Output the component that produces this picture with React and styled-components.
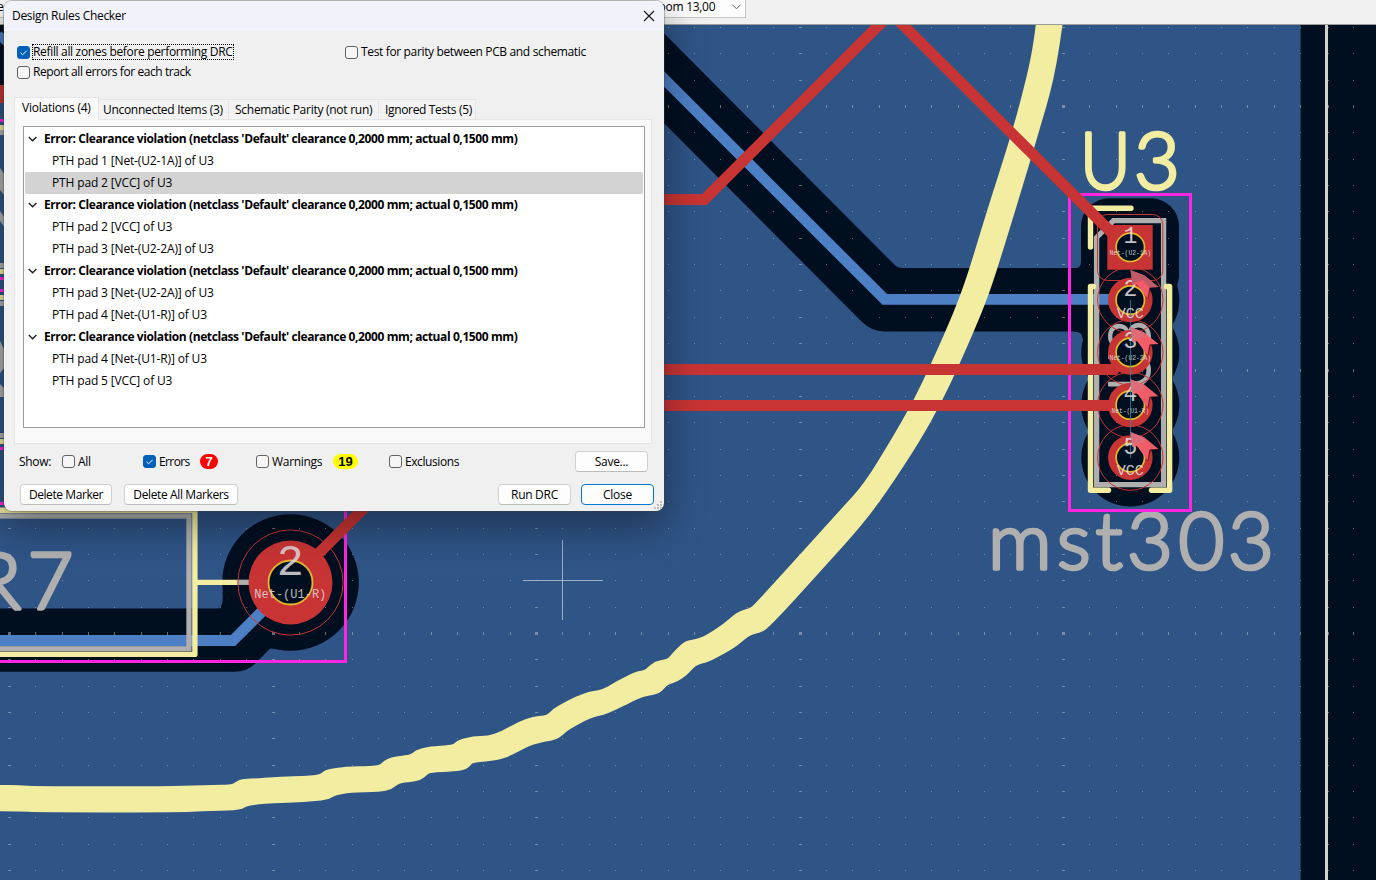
import React from "react";
import styled, { createGlobalStyle, css } from "styled-components";

const C = {
  zone: "#2f5486",
  gap: "#000f20",
  red: "#c83434",
  track: "#4d7fc4",
  silk: "#f2eda1",
  fab: "#afafaf",
  court: "#ff26e2",
  hole: "#e3b72e",
};

const GlobalStyle = createGlobalStyle`
  html, body { margin: 0; padding: 0; overflow: hidden; }
  * { box-sizing: border-box; }
`;

const Editor = styled.div`
  position: relative;
  width: 1376px;
  height: 880px;
  overflow: hidden;
  display: flex;
  flex-direction: column;
  background: ${C.zone};
  font-family: "Open Sans", "Noto Sans", sans-serif;
  font-size: 12px;
  color: #000;
`;

const Toolbar = styled.div`
  height: 25px;
  flex: none;
  display: flex;
  align-items: flex-start;
  background: #f0f0f0;
  border-bottom: 1px solid #9c9c98;
`;

const GridCombo = styled.div`
  width: 600px;
  height: 18px;
  line-height: 14px;
  background: #fdfdfd;
  border-bottom: 1px solid #c4c4c4;
  white-space: nowrap;
  text-indent: -3px;
`;

const ZoomCombo = styled.div`
  width: 146px;
  height: 18px;
  padding: 0 4px 4px 52px;
  display: flex;
  align-items: center;
  justify-content: space-between;
  background: #fdfdfd;
  border: solid #c4c4c4;
  border-width: 0 1px 1px 0;
  letter-spacing: -0.28px;
`;

const Board = styled.svg`
  flex: none;
  display: block;
`;

const Dialog = styled.section`
  position: absolute;
  left: 4px;
  top: 1px;
  width: 660px;
  height: 510px;
  display: flex;
  flex-direction: column;
  background: #f0f0f0;
  border-radius: 8px;
  box-shadow: 0 0 1px 1px rgba(70, 70, 70, 0.35), 0 14px 38px 2px rgba(0, 0, 0, 0.36);
`;

const TitleBar = styled.header`
  height: 30px;
  flex: none;
  display: flex;
  align-items: center;
  justify-content: space-between;
  padding: 0 9px 0 8px;
  background: #f2f2fa;
  border-radius: 8px 8px 0 0;
`;

const Label = styled.span`
  white-space: nowrap;
  line-height: 16px;
  letter-spacing: ${(p) => p.$ls ?? -0.3}px;
  ${(p) =>
    p.$focus &&
    css`
      outline: 1px dotted #000;
      outline-offset: -1px;
      margin-left: -1px;
      padding: 0 1px;
      line-height: 16px;
    `}
`;

const Options = styled.div`
  display: grid;
  grid-template-columns: 328px 1fr;
  grid-auto-rows: 20px;
  padding: 11px 0 0 13px;
  height: 66px;
  flex: none;
`;

const Check = styled.label`
  display: flex;
  align-items: center;
  gap: 3px;
  width: ${(p) => (p.$w ? `${p.$w}px` : "auto")};
`;

const Box = styled.span`
  width: 13px;
  height: 13px;
  flex: none;
  display: flex;
  align-items: center;
  justify-content: center;
  border: 1px solid ${(p) => (p.$on ? "#005fb8" : "#626262")};
  background: ${(p) => (p.$on ? "#005fb8" : "#f6f6f6")};
  border-radius: 3px;
`;

const Tabs = styled.div`
  display: flex;
  align-items: flex-end;
  height: 22px;
  flex: none;
  margin-left: 10px;
  position: relative;
  z-index: 1;
`;

const Tab = styled.div`
  width: ${(p) => p.$w}px;
  height: ${(p) => (p.$active ? 23 : 20)}px;
  margin-bottom: ${(p) => (p.$active ? -1 : 0)}px;
  padding: ${(p) => (p.$active ? "0 0 3px" : "1px 0 0")};
  padding-left: ${(p) => p.$pad}px;
  display: flex;
  align-items: center;
  background: ${(p) => (p.$active ? "#f9f9f9" : "#f3f3f3")};
  border: 1px solid #e5e5e5;
  border-width: ${(p) => (p.$active ? "1px 1px 0 1px" : "1px 1px 0 0")};
`;

const Panel = styled.div`
  width: 638px;
  height: 325px;
  flex: none;
  margin-left: 10px;
  padding: 6px 6px 15px 8px;
  background: #f9f9f9;
  border: 1px solid #e5e5e5;
  display: flex;
`;

const Tree = styled.div`
  flex: 1;
  background: #fff;
  border: 1px solid #9a9ca0;
  padding: 1px;
`;

const TreeRow = styled.div`
  height: 22px;
  display: flex;
  align-items: center;
  padding-left: ${(p) => (p.$group ? 3 : 27)}px;
  border-radius: 2px;
  background: ${(p) => (p.$selected ? "#d3d3d3" : "transparent")};
  font-weight: ${(p) => (p.$group ? 700 : 400)};
`;

const Chevron = styled.svg`
  flex: none;
  margin-right: 6px;
`;

const Filters = styled.div`
  height: 36px;
  flex: none;
  display: flex;
  align-items: center;
  padding: 0 16px 1px 15px;
`;

const ShowLabel = styled.div`
  width: 43px;
`;

const Badge = styled.span`
  height: 15px;
  width: ${(p) => p.$w}px;
  margin-right: ${(p) => p.$mr}px;
  border-radius: 8px;
  display: flex;
  align-items: center;
  justify-content: center;
  background: ${(p) => p.$bg};
  color: ${(p) => p.$fg};
  font: 700 13px "Liberation Sans", sans-serif;
`;

const Button = styled.button`
  width: ${(p) => p.$w}px;
  height: 21px;
  padding: 0;
  flex: none;
  background: #fdfdfd;
  border: 1px solid ${(p) => (p.$primary ? "#0078d4" : "#d0d0d0")};
  border-bottom-color: ${(p) => (p.$primary ? "#0078d4" : "#bcbcbc")};
  border-radius: 4px;
  font: inherit;
  color: #000;
  display: flex;
  align-items: center;
  justify-content: center;
  margin-left: ${(p) => p.$ml ?? 0}px;
`;

const Spacer = styled.div`
  flex: 1;
`;

const Actions = styled.footer`
  display: flex;
  padding: 4px 10px 0 16px;
`;

const Grip = styled.svg`
  position: absolute;
  right: 2px;
  bottom: 2px;
`;

function CheckItem({ on, focus, w, ls, children }) {
  return (
    <Check $w={w}>
      <Box $on={on}>
        {on && (
          <svg width="11" height="11" viewBox="0 0 11 11">
            <path d="M2.5 5.8 L4.6 7.8 L8.6 3.8" fill="none" stroke="#fff" strokeWidth="1" />
          </svg>
        )}
      </Box>
      <Label $focus={focus} $ls={ls}>{children}</Label>
    </Check>
  );
}

const violations = [
  ["PTH pad 1 [Net-(U2-1A)] of U3", "PTH pad 2 [VCC] of U3"],
  ["PTH pad 2 [VCC] of U3", "PTH pad 3 [Net-(U2-2A)] of U3"],
  ["PTH pad 3 [Net-(U2-2A)] of U3", "PTH pad 4 [Net-(U1-R)] of U3"],
  ["PTH pad 4 [Net-(U1-R)] of U3", "PTH pad 5 [VCC] of U3"],
];

function DrcDialog() {
  return (
    <Dialog>
      <TitleBar>
        <Label>Design Rules Checker</Label>
        <svg width="12" height="12" viewBox="0 0 12 12">
          <path d="M1 1 L11 11 M11 1 L1 11" stroke="#111" strokeWidth="1.1" />
        </svg>
      </TitleBar>
      <Options>
        <CheckItem on focus ls={-0.33}>Refill all zones before performing DRC</CheckItem>
        <CheckItem ls={-0.35}>Test for parity between PCB and schematic</CheckItem>
        <CheckItem ls={-0.42}>Report all errors for each track</CheckItem>
      </Options>
      <Tabs>
        <Tab $active $w={85} $pad={7}><Label $ls={-0.22}>Violations (4)</Label></Tab>
        <Tab $w={130} $pad={4}><Label>Unconnected Items (3)</Label></Tab>
        <Tab $w={150} $pad={6}><Label $ls={-0.27}>Schematic Parity (not run)</Label></Tab>
        <Tab $w={97} $pad={6}><Label $ls={-0.34}>Ignored Tests (5)</Label></Tab>
      </Tabs>
      <Panel>
        <Tree>
          {violations.map((items, i) => (
            <React.Fragment key={i}>
              <TreeRow $group>
                <Chevron width="10" height="10" viewBox="0 0 10 10">
                  <path d="M0.8 3 L4.6 6.8 L8.4 3" fill="none" stroke="#222" strokeWidth="1.4" />
                </Chevron>
                <Label $ls={-0.4}>Error: Clearance violation (netclass 'Default' clearance 0,2000 mm; actual 0,1500 mm)</Label>
              </TreeRow>
              {items.map((t, j) => (
                <TreeRow key={j} $selected={i === 0 && j === 1}>
                  <Label $ls={-0.15}>{t}</Label>
                </TreeRow>
              ))}
            </React.Fragment>
          ))}
        </Tree>
      </Panel>
      <Filters>
        <ShowLabel><Label>Show:</Label></ShowLabel>
        <CheckItem w={81}>All</CheckItem>
        <CheckItem on w={57} ls={-0.6}>Errors</CheckItem>
        <Badge $w={18} $mr={38} $bg="#ff0000" $fg="#fff">7</Badge>
        <CheckItem w={77}>Warnings</CheckItem>
        <Badge $w={25} $mr={31} $bg="#ffff00" $fg="#000">19</Badge>
        <CheckItem ls={-0.42}>Exclusions</CheckItem>
        <Spacer />
        <Button $w={73}><Label>Save...</Label></Button>
      </Filters>
      <Actions>
        <Button $w={92}><Label $ls={-0.42}>Delete Marker</Label></Button>
        <Button $w={114} $ml={12}><Label $ls={-0.38}>Delete All Markers</Label></Button>
        <Spacer />
        <Button $w={73}><Label>Run DRC</Label></Button>
        <Button $w={73} $ml={10} $primary><Label>Close</Label></Button>
      </Actions>
      <Grip width="8" height="8" viewBox="0 0 8 8" fill="#bdbdbd">
        <path d="M6 0h2v2h-2z M3 3h2v2h-2z M6 3h2v2h-2z M0 6h2v2h-2z M3 6h2v2h-2z M6 6h2v2h-2z" />
      </Grip>
    </Dialog>
  );
}

const PITCH = 26.35;

function GridDots() {
  const dots = [];
  for (let i = 0; i < 53; i++) {
    for (let j = -3; j < 30; j++) {
      const major = i % 10 === 0;
      const majorRow = ((j % 10) + 10) % 10 === 0;
      const x = Math.floor(9.5 + i * PITCH);
      const y = Math.floor(106.5 + j * PITCH);
      if (y < 25) continue;
      dots.push(`M${major ? x - 1 : x} ${majorRow ? y - 1 : y}h${major ? 3 : 1}v${majorRow ? 3 : 1}h${major ? -3 : -1}z`);
    }
  }
  return <path d={dots.join("")} fill="#c6c9c6" opacity="0.5" shapeRendering="crispEdges" />;
}

// hand-drawn board outline on the silkscreen: the upper edge, then the lower edge back
const outlinePoints = [
  [-30, 785], [0, 785], [18, 785.2], [39, 786.3], [172, 786.3], [193, 785.3], [213, 785], [230, 784.6], [234, 783.4],
  [239, 779.6], [246, 779], [283, 776.5], [303, 776], [317, 774.8], [321, 773.5], [326, 769.5], [346, 766.6], [371, 766],
  [379, 765], [382, 763], [387, 758.7], [396, 756.2], [408, 755.2], [412, 753.5], [417, 749.5], [430, 746.5], [450, 745.2],
  [453.5, 744], [459, 739.4], [473, 736.4], [488, 735.8], [501, 731.5], [518, 721.8], [533, 716.6], [545, 715.5],
  [548, 714], [555, 707.3], [584, 692.4], [603, 689.6], [617, 680.7], [636, 671.6], [643, 670.6], [646, 669],
  [655, 661], [666, 659.4], [669.5, 657], [676, 649], [685.5, 640.8], [696.7, 639.3], [707, 634.9], [723, 624.3],
  [737, 612], [750, 608], [754, 605], [795, 560], [842, 508], [864, 484], [891, 440], [914, 400], [931.3, 363],
  [945.7, 331], [959, 299], [970, 267], [985, 217], [1009, 142], [1021.7, 97], [1031, 58], [1036, 25], [1038, 0],
  [1066, 0], [1062.5, 25], [1057, 62], [1050, 94], [1042, 121], [1030, 162], [1001.7, 255], [988, 297], [974, 331],
  [960, 363], [942.7, 400], [920.7, 440], [886, 493], [862, 525], [830.7, 560], [768.5, 628.5], [759, 633],
  [750, 634.8], [736.7, 646.3], [725, 653.3], [708, 662.2], [696, 665], [686.7, 675.3], [678, 681.4], [668, 684.5],
  [665, 687.5], [659, 693.8], [648, 695.8], [640, 697.6], [606.7, 714.6], [592, 717], [568, 730], [564, 734],
  [556, 740], [545, 741.6], [530, 745.3], [511.7, 755.2], [498, 760.4], [473, 762.6], [471, 765], [466, 769.6],
  [455, 771.3], [430, 772.6], [427, 775], [421, 779.8], [411, 782], [399, 783], [391, 789.8], [380, 791.9],
  [350, 792.8], [335, 795], [328, 799.8], [303, 802.4], [283, 802.7], [248, 805], [241, 810.2], [213, 811],
  [172, 812.4], [39, 812.4], [18, 811.3], [-30, 811.3],
];

function smooth(points) {
  const mid = (a, b) => [(a[0] + b[0]) / 2, (a[1] + b[1]) / 2];
  const n = points.length;
  let d = `M${mid(points[n - 1], points[0]).join(" ")}`;
  points.forEach((p, i) => {
    d += ` Q${p.join(" ")} ${mid(p, points[(i + 1) % n]).join(" ")}`;
  });
  return `${d} Z`;
}

const pads = [
  { n: "1", y: 247.3, net: "Net-(U2-1A)" },
  { n: "2", y: 300, net: "VCC" },
  { n: "3", y: 352.4, net: "Net-(U2-2A)" },
  { n: "4", y: 405, net: "Net-(U1-R)" },
  { n: "5", y: 457.6, net: "VCC" },
];

const mono = '"Liberation Mono", monospace';
const sketch = 'Lato, "Open Sans", sans-serif';

function BoardText({ x, y, size, color, w, children, transform, weight = 300 }) {
  return (
    <text
      x={x}
      y={y}
      fontFamily={sketch}
      fontWeight={weight}
      fontSize={size}
      fill={color}
      stroke={color}
      strokeWidth={w}
      strokeLinejoin="round"
      strokeLinecap="round"
      transform={transform}
    >
      {children}
    </text>
  );
}

function Pad({ n, y }) {
  return (
    <g>
      {n === "1" ? (
        <>
          <rect x="1107.3" y="225" width="45.4" height="44.7" fill={C.red} />
          <rect x="1097.5" y="214.5" width="65.3" height="66" rx="10" fill="none" stroke={C.red} />
        </>
      ) : (
        <>
          <circle cx="1130.3" cy={y} r="22.3" fill={C.red} />
          <circle cx="1130.3" cy={y} r="32.7" fill="none" stroke={C.red} />
        </>
      )}
      <circle cx="1130.3" cy={y} r="14.2" fill={C.gap} stroke={C.hole} strokeWidth="1.7" />
    </g>
  );
}

function PadText({ n, y, net }) {
  const long = net.length > 4;
  return (
    <g fill="#e6e2e4" fillOpacity="0.85" textAnchor="middle" fontFamily={mono}>
      <text x="1130.3" y={y - 4} fontSize="23">{n}</text>
      <text x="1130.3" y={long ? y + 8 : y + 17.5} fontSize={long ? 6.3 : 15}>{net}</text>
    </g>
  );
}

function BoardCanvas() {
  return (
    <Board width="1376" height="855" viewBox="0 25 1376 855">
      <rect x="0" y="25" width="1376" height="855" fill={C.zone} />
      {/* zone clearances */}
      <g fill={C.gap}>
        <rect x="1300.5" y="25" width="76" height="855" />
        <path d="M600 14 L884.5 299.7 L1110 299.7" fill="none" stroke={C.gap} strokeWidth="63.4" strokeLinejoin="round" />
        <path d="M889 260 Q896 268.3 903 268.3 V275 H885 Z" />
        <path d="M-10 640.2 H234 L290.5 582.5" fill="none" stroke={C.gap} strokeWidth="63.2" strokeLinejoin="round" />
        <circle cx="290.5" cy="582.5" r="68.3" />
        <path d="M222.5 592 Q224 608.5 217 608.5 H232 V592 Z" />
        <path d="M256 661 Q265 649 271 648.5 L290 650 L260 640 Z" />
        <rect x="1081" y="198.3" width="98" height="100" rx="28" />
        <path d="M1081 240 V262 Q1081 268.3 1074 268.3 V331.5 Q1083 331.5 1082.5 339 L1090 345 V240 Z" />
        <path d="M1179 240 V278 L1177 286 H1160 V240 Z" />
        {pads.slice(1).map((p) => (
          <circle key={p.n} cx="1130.3" cy={p.y} r="49" />
        ))}
        <rect x="1088" y="290" width="85" height="160" />
        <rect x="0" y="25" width="5" height="78" />
      </g>
      <GridDots />
      <rect x="1325" y="25" width="3" height="855" fill="#d0d2cd" />
      {/* bottom copper */}
      <g fill="none" stroke={C.track} strokeWidth="10.9">
        <path d="M600 15 L884.7 299.4 H1130" />
        <path d="M-10 640.5 H233 L290.5 583" />
        <path d="M0 42 L6 36" strokeWidth="13" />
      </g>
      {/* fabrication layer */}
      <g fill="none" stroke={C.fab} strokeWidth="5.3">
        <rect x="-40" y="516" width="229" height="132.8" />
        <path d="M1096.6 484.6 V237.5 L1113.5 220.6 H1163.6 V484.6 Z" />
        <path d="M237 582.3 H250" />
      </g>
      <BoardText x="-27 27.5" y="608.5" size="79" color={C.fab} w="3.6">R7</BoardText>
      <BoardText x="988 1057 1095.5 1127 1178.5 1228" y="569" size="79" color={C.fab} w="3.6">mst303</BoardText>
      <BoardText x="0 38" y="0" size="57" color={C.fab} w="2" transform="translate(1150 391) rotate(-90)">U3</BoardText>
      {/* silkscreen */}
      <path d={smooth(outlinePoints)} fill={C.silk} />
      <g fill="none" stroke={C.silk} strokeWidth="5.4" strokeLinejoin="round" strokeLinecap="round">
        <rect x="-40" y="510.2" width="234.9" height="144.2" />
        <path d="M1131 208.3 H1090.5 V247" />
        <path d="M1093.5 286.5 H1090.5 V490.3 H1108.5" />
        <path d="M1166.5 286.5 H1169.6 V490.3 H1151.5" />
      </g>
      <path d="M197 582.3 H237.5" stroke={C.silk} strokeWidth="5.3" />
      <BoardText x="0" y="0" size="79" color={C.silk} w="3.6" transform="translate(1080 188.5) scale(0.88 1)">U</BoardText>
      <BoardText x="1134" y="188.5" size="79" color={C.silk} w="3.6">3</BoardText>
      {/* courtyards */}
      <g fill="none" stroke={C.court} strokeWidth="3">
        <rect x="1069.5" y="194.5" width="121" height="316" />
        <rect x="-40" y="503.5" width="385.5" height="158" />
      </g>
      {/* slivers of the footprints left of the dialog */}
      <g>
        <rect x="0" y="85" width="5" height="18" fill={C.red} />
        <rect x="0" y="103" width="5" height="16" fill={C.zone} />
        {[119, 277, 289, 447].map((y) => <rect key={y} x="0" y={y} width="5" height="3" fill={C.court} />)}
        {[125, 269, 295, 439].map((y) => <rect key={y} x="0" y={y} width="5" height="5" fill={C.silk} />)}
        {[130, 263, 301, 433].map((y) => <rect key={y} x="0" y={y} width="5" height="5" fill={C.fab} />)}
        <path d="M0 168 L5 175 V196 L0 190 Z M0 211 L5 218 V228 L0 221 Z M0 341 L5 351 V367 L0 373 Z M0 384 L5 389 V397 H0 Z" fill={C.fab} />
      </g>
      {/* top copper */}
      <g fill="none" stroke={C.red} strokeWidth="11">
        <path d="M640 199.5 H704.5 L885 19" />
        <path d="M895 17 L1128 249" />
        <path d="M640 369.5 H1114 L1130 354" />
        <path d="M640 405.6 H1130" />
        <path d="M290.5 581.5 L372 500" />
      </g>
      {pads.map((p) => <Pad key={p.n} {...p} />)}
      <path d="M1130.5 300 V458" stroke="#15a0a8" strokeWidth="1" opacity="0.7" />
      {pads.map((p) => <PadText key={p.n} {...p} />)}
      {/* DRC markers */}
      {[270, 327, 379.3, 432].map((y, i) => (
        <g key={y} transform={`translate(1130.5 ${y})`}>
          <path d="M1 1 L17.5 30 L20 19 L29 17.5 Z" fill="#1b0c18" opacity="0.6" />
          <path d="M0 0 L14 5.5 L28 17 L19 17.5 L17 28.5 L6.5 14 L2 15 Z" fill="#f9606d" opacity="0.95" />
          <path d="M0 0 L14 5.5 L13 10 L6.5 12 L2 15 Z" fill={i ? "#d8707c" : "#b45a68"} opacity="0.8" />
          {i === 0 && <path d="M14 5.5 L28 17 L19 17.5 L12 9 Z" fill="#b45a68" opacity="0.8" />}
        </g>
      ))}
      {/* resistor pad */}
      <circle cx="290.5" cy="582.5" r="42" fill={C.red} />
      <circle cx="290.5" cy="582.5" r="52.6" fill="none" stroke={C.red} />
      <circle cx="290.5" cy="582.5" r="22" fill={C.gap} stroke={C.hole} strokeWidth="1.8" />
      <g fill="#e2dcde" fillOpacity="0.85" textAnchor="middle" fontFamily={mono}>
        <text x="290.3" y="575" fontSize="45">2</text>
        <text x="290.3" y="598" fontSize="12">Net-(U1-R)</text>
      </g>
      {/* cursor */}
      <path d="M562.5 540 V620 M523 580.5 H603" stroke="#b4bccd" strokeWidth="1" opacity="0.85" />
    </Board>
  );
}

export default function App() {
  return (
    <Editor>
      <GlobalStyle />
      <Toolbar>
        <GridCombo>e</GridCombo>
        <ZoomCombo>
          Zoom 13,00
          <svg width="9" height="6" viewBox="0 0 9 6">
            <path d="M0.5 0.8 L4.5 4.8 L8.5 0.8" fill="none" stroke="#666" strokeWidth="1" />
          </svg>
        </ZoomCombo>
      </Toolbar>
      <BoardCanvas />
      <DrcDialog />
    </Editor>
  );
}
